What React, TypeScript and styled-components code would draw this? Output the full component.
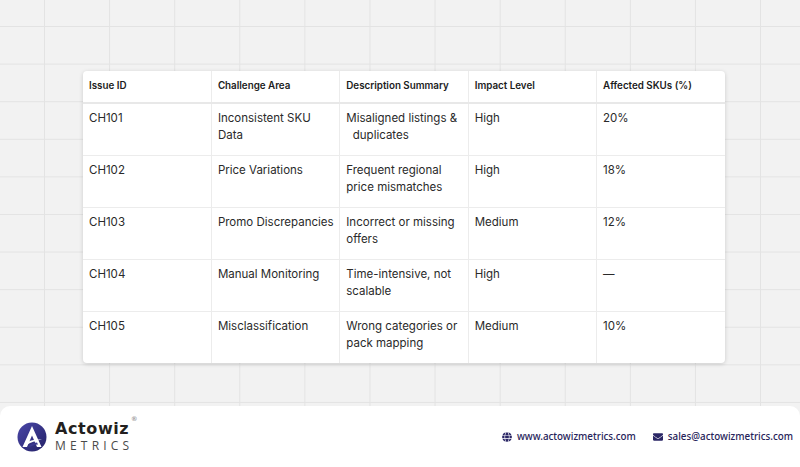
import React from "react";
import styled, { createGlobalStyle } from "styled-components";
import { FaGlobe, FaEnvelope } from "react-icons/fa";

const GlobalStyle = createGlobalStyle`
  html, body {
    margin: 0;
    padding: 0;
  }
  body {
    font-family: Inter, "Noto Sans", sans-serif;
    background: #f2f2f2;
  }
`;

const Page = styled.div`
  width: 800px;
  height: 467px;
  display: flex;
  flex-direction: column;
  overflow: hidden;
  background-color: #f2f2f2;
  background-image: linear-gradient(to right, #e3e3e3 1px, transparent 1px),
    linear-gradient(to bottom, #e3e3e3 1px, transparent 1px);
  background-size: 65.1px 37.6px;
  background-position: 44px 26px;
`;

const Stage = styled.div`
  height: 406px;
  padding: 71px 0 0 83px;
  box-sizing: border-box;
`;

const Card = styled.div`
  width: 642px;
  background: #fff;
  border-radius: 4px;
  box-shadow: 0 1px 4px rgba(0, 0, 0, 0.16);
  overflow: hidden;
`;

const Table = styled.table`
  width: 100%;
  border-collapse: collapse;
  table-layout: fixed;
`;

const HeadCell = styled.th`
  height: 32px;
  padding: 0 6px 2px;
  text-align: left;
  font-size: 9.8px;
  font-weight: 600;
  color: #1c1c1c;
  border-bottom: 2px solid #e8e8e8;
  border-left: 1.5px solid #ececec;
  box-sizing: border-box;
  white-space: nowrap;
  &:first-child {
    border-left: none;
  }
`;

const Row = styled.tr`
  &:not(:last-child) td {
    border-bottom: 1.5px solid #ececec;
  }
`;

const Cell = styled.td`
  height: 52px;
  padding: 6px 5px 0 6px;
  vertical-align: top;
  font-size: 11.5px;
  line-height: 17px;
  color: #2a2a2a;
  white-space: nowrap;
  border-left: 1.5px solid #ececec;
  box-sizing: border-box;
  &:first-child {
    border-left: none;
  }
`;

const Footer = styled.div`
  flex: 1;
  background: #fff;
  border-radius: 10px 10px 0 0;
  display: flex;
  align-items: center;
  justify-content: space-between;
  padding: 0 7px 0 17px;
`;

const Brand = styled.div`
  display: flex;
  align-items: center;
  gap: 8px;
`;

const BrandText = styled.div`
  display: flex;
  flex-direction: column;
  position: relative;
`;

const BrandName = styled.span`
  font-family: "DejaVu Sans", sans-serif;
  font-size: 16px;
  font-weight: 700;
  color: #231f20;
  line-height: 16px;
  letter-spacing: 0.6px;
`;

const Reg = styled.span`
  position: absolute;
  left: 76px;
  top: -6px;
  font-family: "DejaVu Sans", sans-serif;
  font-size: 6.5px;
  color: #777;
`;

const BrandSub = styled.span`
  font-family: "Open Sans", sans-serif;
  font-size: 12px;
  font-weight: 400;
  color: #4a4a4a;
  letter-spacing: 4.2px;
  line-height: 14px;
  margin-top: 2px;
`;

const Contacts = styled.div`
  display: flex;
  align-items: center;
  gap: 17px;
`;

const Contact = styled.div`
  display: flex;
  align-items: center;
  gap: 5px;
  font-family: "Noto Sans", sans-serif;
  font-size: 9.8px;
  font-weight: 500;
  color: #27235a;
  svg {
    color: #2b2766;
  }
`;

const rows = [
  ["CH101", ["Inconsistent SKU", "Data"], ["Misaligned listings &", "\u00a0 duplicates"], "High", "20%"],
  ["CH102", ["Price Variations"], ["Frequent regional", "price mismatches"], "High", "18%"],
  ["CH103", ["Promo Discrepancies"], ["Incorrect or missing", "offers"], "Medium", "12%"],
  ["CH104", ["Manual Monitoring"], ["Time-intensive, not", "scalable"], "High", "—"],
  ["CH105", ["Misclassification"], ["Wrong categories or", "pack mapping"], "Medium", "10%"],
] as const;

const Lines = ({ lines }: { lines: readonly string[] }) => (
  <>
    {lines.map((l, i) => (
      <React.Fragment key={i}>
        {i > 0 && <br />}
        {l}
      </React.Fragment>
    ))}
  </>
);

const Logo = () => (
  <svg width="30" height="30" viewBox="0 0 30 30">
    <defs>
      <linearGradient id="lg" x1="0" y1="0" x2="1" y2="1">
        <stop offset="0" stopColor="#4a47a8" />
        <stop offset="1" stopColor="#232066" />
      </linearGradient>
    </defs>
    <circle cx="15" cy="15" r="14.5" fill="url(#lg)" />
    <path d="M15 4 L24.5 25 L20 25 L15 13.5 L10 25 L5.5 25 Z" fill="#fff" />
    <path d="M8 21.5 C12 18.5 18 17 25 17.5 C19 18.5 13 20.5 9.5 23 Z" fill="#fff" />
    <path d="M10.5 25 C13 22.5 16 21 20 20.5 L21 22.5 C17.5 22.8 14.5 23.8 12.5 25 Z" fill="#3a3790" />
  </svg>
);

const App = () => {
  return (
    <Page>
      <GlobalStyle />
      <Stage>
        <Card>
          <Table>
            <thead>
              <tr>
                <HeadCell>Issue ID</HeadCell>
                <HeadCell>Challenge Area</HeadCell>
                <HeadCell>Description Summary</HeadCell>
                <HeadCell>Impact Level</HeadCell>
                <HeadCell>Affected SKUs (%)</HeadCell>
              </tr>
            </thead>
            <tbody>
              {rows.map((r) => (
                <Row key={r[0]}>
                  <Cell>{r[0]}</Cell>
                  <Cell>
                    <Lines lines={r[1]} />
                  </Cell>
                  <Cell>
                    <Lines lines={r[2]} />
                  </Cell>
                  <Cell>{r[3]}</Cell>
                  <Cell>{r[4]}</Cell>
                </Row>
              ))}
            </tbody>
          </Table>
        </Card>
      </Stage>
      <Footer>
        <Brand>
          <Logo />
          <BrandText>
            <BrandName>Actowiz</BrandName>
            <Reg>®</Reg>
            <BrandSub>METRICS</BrandSub>
          </BrandText>
        </Brand>
        <Contacts>
          <Contact>
            <FaGlobe size={10} />
            www.actowizmetrics.com
          </Contact>
          <Contact>
            <FaEnvelope size={10} />
            sales@actowizmetrics.com
          </Contact>
        </Contacts>
      </Footer>
    </Page>
  );
};

export default App;
